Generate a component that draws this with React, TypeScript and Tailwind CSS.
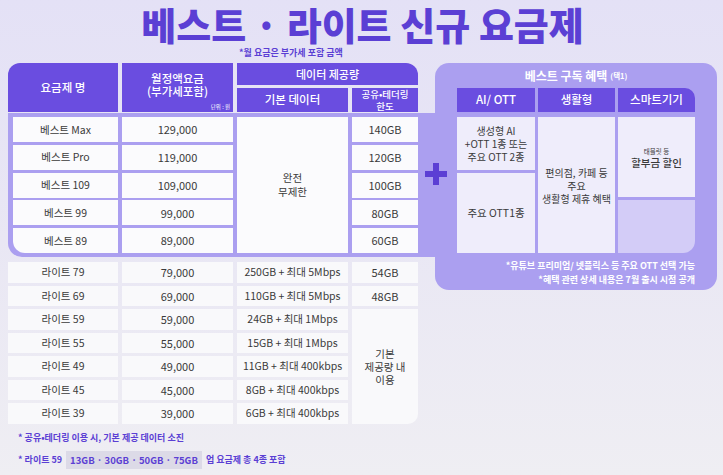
import React from 'react';

const best = [
  ['베스트 Max', '129,000', '140GB'],
  ['베스트 Pro', '119,000', '120GB'],
  ['베스트 109', '109,000', '100GB'],
  ['베스트 99', '99,000', '80GB'],
  ['베스트 89', '89,000', '60GB'],
];

const lite = [
  ['라이트 79', '79,000', '250GB + 최대 5Mbps', '54GB'],
  ['라이트 69', '69,000', '110GB + 최대 5Mbps', '48GB'],
  ['라이트 59', '59,000', '24GB + 최대 1Mbps'],
  ['라이트 55', '55,000', '15GB + 최대 1Mbps'],
  ['라이트 49', '49,000', '11GB + 최대 400kbps'],
  ['라이트 45', '45,000', '8GB + 최대 400kbps'],
  ['라이트 39', '39,000', '6GB + 최대 400kbps'],
];

function Cell({ children, className = '' }: { children: React.ReactNode; className?: string }) {
  return (
    <div className={`flex items-center justify-center text-center text-[10.5px] text-[#3a3a3a] ${className}`}>
      {children}
    </div>
  );
}

export default function App() {
  return (
    <div className="h-[475px] w-[723px] overflow-hidden bg-gradient-to-b from-[#e4e1f6] via-[#e9e7f4] to-[#efeef3] px-[8px] pt-[2px] pr-[6px] font-['Noto_Sans_CJK_KR','Noto_Sans',sans-serif]">
      {/* Title */}
      <h1 className="flex h-[44px] items-center justify-center text-[38px] leading-[44px] font-black text-[#5b3fd4]">
        베스트 · 라이트 신규 요금제
      </h1>
      <div className="flex h-[14px] items-center pl-[231px] text-[9px] leading-[14px] font-bold text-[#5b3fd4]">
        *월 요금은 부가세 포함 금액
      </div>

      <div className="mt-[3px] flex items-start">
        {/* Left: plan table */}
        <div className="w-[427px]">
          <div className="grid w-[410px] grid-cols-[110px_111px_111px_66px] grid-rows-[22px_24px] gap-x-[4px] gap-y-[3px] text-white">
            <div className="row-span-2 flex items-center justify-center rounded-tl-[12px] bg-[#6a4de0] text-[11.5px] font-medium">
              요금제 명
            </div>
            <div className="row-span-2 flex flex-col bg-[#6a4de0]">
              <div className="flex flex-1 flex-col items-center justify-center pt-[4px] text-[11.5px] leading-[13.5px] font-medium">
                <span>월정액요금</span>
                <span>(부가세포함)</span>
              </div>
              <div className="h-[9px] self-end pr-[3px] text-[5.5px] leading-[9px]">단위 : 원</div>
            </div>
            <div className="col-span-2 flex items-center justify-center rounded-tr-[12px] bg-[#6a4de0] text-[11px] font-medium">
              데이터 제공량
            </div>
            <div className="flex items-center justify-center bg-[#6a4de0] text-[11.5px] font-medium">기본 데이터</div>
            <div className="flex flex-col items-center justify-center bg-[#6a4de0] text-[9.5px] leading-[12px] font-medium">
              <span>공유•테더링</span>
              <span>한도</span>
            </div>
          </div>

          {/* Best plans */}
          <div className="relative mt-[1px] rounded-bl-[14px] bg-[#ab9ff0] pt-[4px] pb-[4px] pl-[5px]">
            <div className="grid w-[405px] grid-cols-[105px_111px_111px_66px] grid-rows-[25px_25px_25px_25px_25px] gap-x-[4px] gap-y-[2.75px]">
              {best.map((r, i) => (
                <React.Fragment key={r[0]}>
                  <Cell className={`bg-[#fbfbfd] ${i === 4 ? 'rounded-bl-[12px]' : ''}`}>{r[0]}</Cell>
                  <Cell className="bg-[#fbfbfd] text-[11px]">{r[1]}</Cell>
                  {i === 0 && (
                    <Cell className="row-span-5 flex-col bg-[#fbfbfd] leading-[14px]">
                      <span>완전</span>
                      <span>무제한</span>
                    </Cell>
                  )}
                  <Cell className="bg-[#fbfbfd] text-[11px]">{r[2]}</Cell>
                </React.Fragment>
              ))}
            </div>
            <svg className="absolute top-[50px] left-[417px] z-10" width="22" height="22" viewBox="0 0 22 22">
              <rect x="8" y="0" width="6" height="22" fill="#5b3fd4" />
              <rect x="0" y="8" width="22" height="6" fill="#5b3fd4" />
            </svg>
          </div>

          {/* Lite plans */}
          <div className="mt-[5px] grid w-[410px] grid-cols-[110px_111px_111px_66px] grid-rows-[20.5px_20.5px_20.5px_20.5px_20.5px_20.5px_20.5px] gap-x-[4px] gap-y-[3px]">
            {lite.map((r, i) => (
              <React.Fragment key={r[0]}>
                <Cell className="bg-[#f9f9fb]">{r[0]}</Cell>
                <Cell className="bg-[#f9f9fb] text-[11px]">{r[1]}</Cell>
                <Cell className="bg-[#f9f9fb]">{r[2]}</Cell>
                {r[3] && <Cell className="bg-[#f9f9fb] text-[11px]">{r[3]}</Cell>}
                {i === 2 && (
                  <Cell className="row-span-5 flex-col rounded-br-[10px] bg-[#f9f9fb] leading-[13px]">
                    <span>기본</span>
                    <span>제공량 내</span>
                    <span>이용</span>
                  </Cell>
                )}
              </React.Fragment>
            ))}
          </div>

          {/* Notes */}
          <div className="mt-[7.5px] pl-[10px] text-[9px] font-bold text-[#5b3fd4]">
            <div className="flex h-[14px] items-center">* 공유•테더링 이용 시, 기본 제공 데이터 소진</div>
            <div className="mt-[6px] flex h-[18px] items-center">
              <span>* 라이트 59</span>
              <span className="mx-[4px] flex h-[18px] items-center bg-[#dcdae7] px-[4px] text-[9.5px] font-semibold">
                13GB · 30GB · 50GB · 75GB
              </span>
              <span>업 요금제 총 4종 포함</span>
            </div>
          </div>
        </div>

        {/* Right: subscription benefits */}
        <div className="w-[282px] rounded-[14px] bg-[#ab9ff0] px-[22px] pb-[4.5px]">
          <div className="flex h-[25px] items-center justify-center text-white">
            <span className="text-[12px] font-bold">베스트 구독 혜택</span>
            <span className="ml-[3px] text-[7.5px] font-bold">(택1)</span>
          </div>
          <div className="grid grid-cols-[78px_77px_77px] gap-x-[3px] text-white">
            <div className="flex h-[24px] items-center justify-center bg-[#6a4de0] text-[11.5px] font-medium">AI/ OTT</div>
            <div className="flex h-[24px] items-center justify-center bg-[#6a4de0] text-[11.5px] font-medium">생활형</div>
            <div className="flex h-[24px] items-center justify-center rounded-tr-[10px] bg-[#6a4de0] text-[11.5px] font-medium">
              스마트기기
            </div>
          </div>
          <div className="mt-[5px] grid h-[136px] grid-cols-[78px_77px_77px] gap-x-[3px]">
            <div className="flex flex-col gap-y-[3px]">
              <Cell className="h-[53px] flex-col bg-[#efedfb] text-[10px] leading-[13px]">
                <span>생성형 AI</span>
                <span>+OTT 1종 또는</span>
                <span>주요 OTT 2종</span>
              </Cell>
              <Cell className="flex-1 bg-[#efedfb]">주요 OTT1종</Cell>
            </div>
            <Cell className="flex-col bg-[#efedfb] text-[10px] leading-[13px]">
              <span>편의점, 카페 등</span>
              <span>주요</span>
              <span>생활형 제휴 혜택</span>
            </Cell>
            <div className="flex flex-col gap-y-[3px]">
              <Cell className="h-[80px] flex-col bg-[#efedfb]">
                <span className="text-[6.5px] leading-[10px]">태블릿 등</span>
                <span className="text-[10.5px] leading-[13px] font-medium">할부금 할인</span>
              </Cell>
              <div className="flex-1 rounded-br-[12px] bg-[#d3ccf7]" />
            </div>
          </div>
          <div className="mt-[5.5px] text-right text-[9px] leading-[13px] font-bold text-white">
            <div>*유튜브 프리미엄/ 넷플릭스 등 주요 OTT 선택 가능</div>
            <div className="mt-[1px]">*혜택 관련 상세 내용은 7월 출시 시점 공개</div>
          </div>
        </div>
      </div>
    </div>
  );
}
